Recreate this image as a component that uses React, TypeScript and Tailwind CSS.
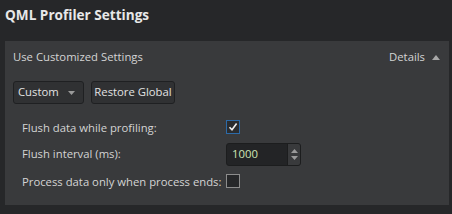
import React, { useState } from 'react';

const font = { fontFamily: '"Open Sans", "Noto Sans", sans-serif' };

function Checkbox({ checked, onChange }: { checked: boolean; onChange: () => void }) {
  return (
    <button
      type="button"
      onClick={onChange}
      className={
        checked
          ? 'flex h-[14px] w-[14px] items-center justify-center border border-[#2c6aa8] bg-[#2b2c2e]'
          : 'flex h-[14px] w-[14px] items-center justify-center border border-[#8c8c8c] bg-[#262729]'
      }
    >
      {checked && (
        <svg width="10" height="10" viewBox="0 0 10 10">
          <path d="M1.5 5.2 L4 7.8 L8.6 1.6" fill="none" stroke="#f0f0f0" strokeWidth="1.6" />
        </svg>
      )}
    </button>
  );
}

export default function App() {
  const [flush, setFlush] = useState(true);
  const [onlyAtEnd, setOnlyAtEnd] = useState(false);
  const [interval, setInterval] = useState(1000);

  return (
    <div className="h-[214px] w-[452px] overflow-hidden whitespace-nowrap bg-[#262729] text-[11.3px] text-[#d4d4d4]" style={font}>
      <div className="flex h-[41px] items-start pl-[5px] pt-[5px] text-[13.6px] font-bold text-[#e8e8e8]">
        QML Profiler Settings
      </div>

      <div className="ml-[5px] h-[164px] w-[444px] bg-[#393a3c]">
        <div className="flex h-[32px] items-center justify-between pl-[8px] pr-[9px]">
          <span>Use Customized Settings</span>
          <span className="flex items-center gap-[7px]">
            Details
            <svg width="8" height="5" viewBox="0 0 8 5">
              <path d="M0 5 L4 0 L8 5 Z" fill="#a8a8a8" />
            </svg>
          </span>
        </div>

        <div className="mt-[8px] flex gap-[7px] pl-[8px]">
          <button
            type="button"
            className="flex h-[23px] w-[71px] items-center justify-between rounded-[3px] border border-[#1f2022] bg-[#303133] pl-[4px] pr-[8px] text-[#e2e2e2]"
          >
            Custom
            <svg width="7" height="4" viewBox="0 0 7 4">
              <path d="M0 0 L7 0 L3.5 4 Z" fill="#9a9a9a" />
            </svg>
          </button>
          <button
            type="button"
            className="flex h-[23px] w-[84px] items-center justify-center rounded-[3px] border border-[#1f2022] bg-[#303133] text-[#e2e2e2]"
          >
            Restore Global
          </button>
        </div>

        <div className="mt-[12px] grid grid-cols-[204px_auto] grid-rows-[22px_22px_22px] gap-y-[5px] pl-[17px]">
          <span className="flex items-center pt-[2px]">Flush data while profiling:</span>
          <span className="flex items-center">
            <Checkbox checked={flush} onChange={() => setFlush(!flush)} />
          </span>

          <span className="flex items-center pt-[1px]">Flush interval (ms):</span>
          <div className="flex h-[23px] w-[75px] rounded-[3px] border border-[#1c1d1e] bg-[#232426]">
            <input
              value={interval}
              onChange={(e) => setInterval(Number(e.target.value) || 0)}
              className="w-[60px] bg-transparent pl-[5px] text-[11.3px] text-[#cfe5b4] outline-none"
            />
            <div className="flex w-[13px] flex-col items-center justify-center gap-[3px] rounded-r-[2px] border-l border-[#1c1d1e] bg-[#393a3c]">
              <svg width="7" height="4" viewBox="0 0 7 4">
                <path d="M0 4 L3.5 0 L7 4 Z" fill="#9a9a9a" />
              </svg>
              <svg width="7" height="4" viewBox="0 0 7 4">
                <path d="M0 0 L7 0 L3.5 4 Z" fill="#9a9a9a" />
              </svg>
            </div>
          </div>

          <span className="flex items-center pt-[2px]">Process data only when process ends:</span>
          <span className="flex items-center">
            <Checkbox checked={onlyAtEnd} onChange={() => setOnlyAtEnd(!onlyAtEnd)} />
          </span>
        </div>
      </div>
    </div>
  );
}
